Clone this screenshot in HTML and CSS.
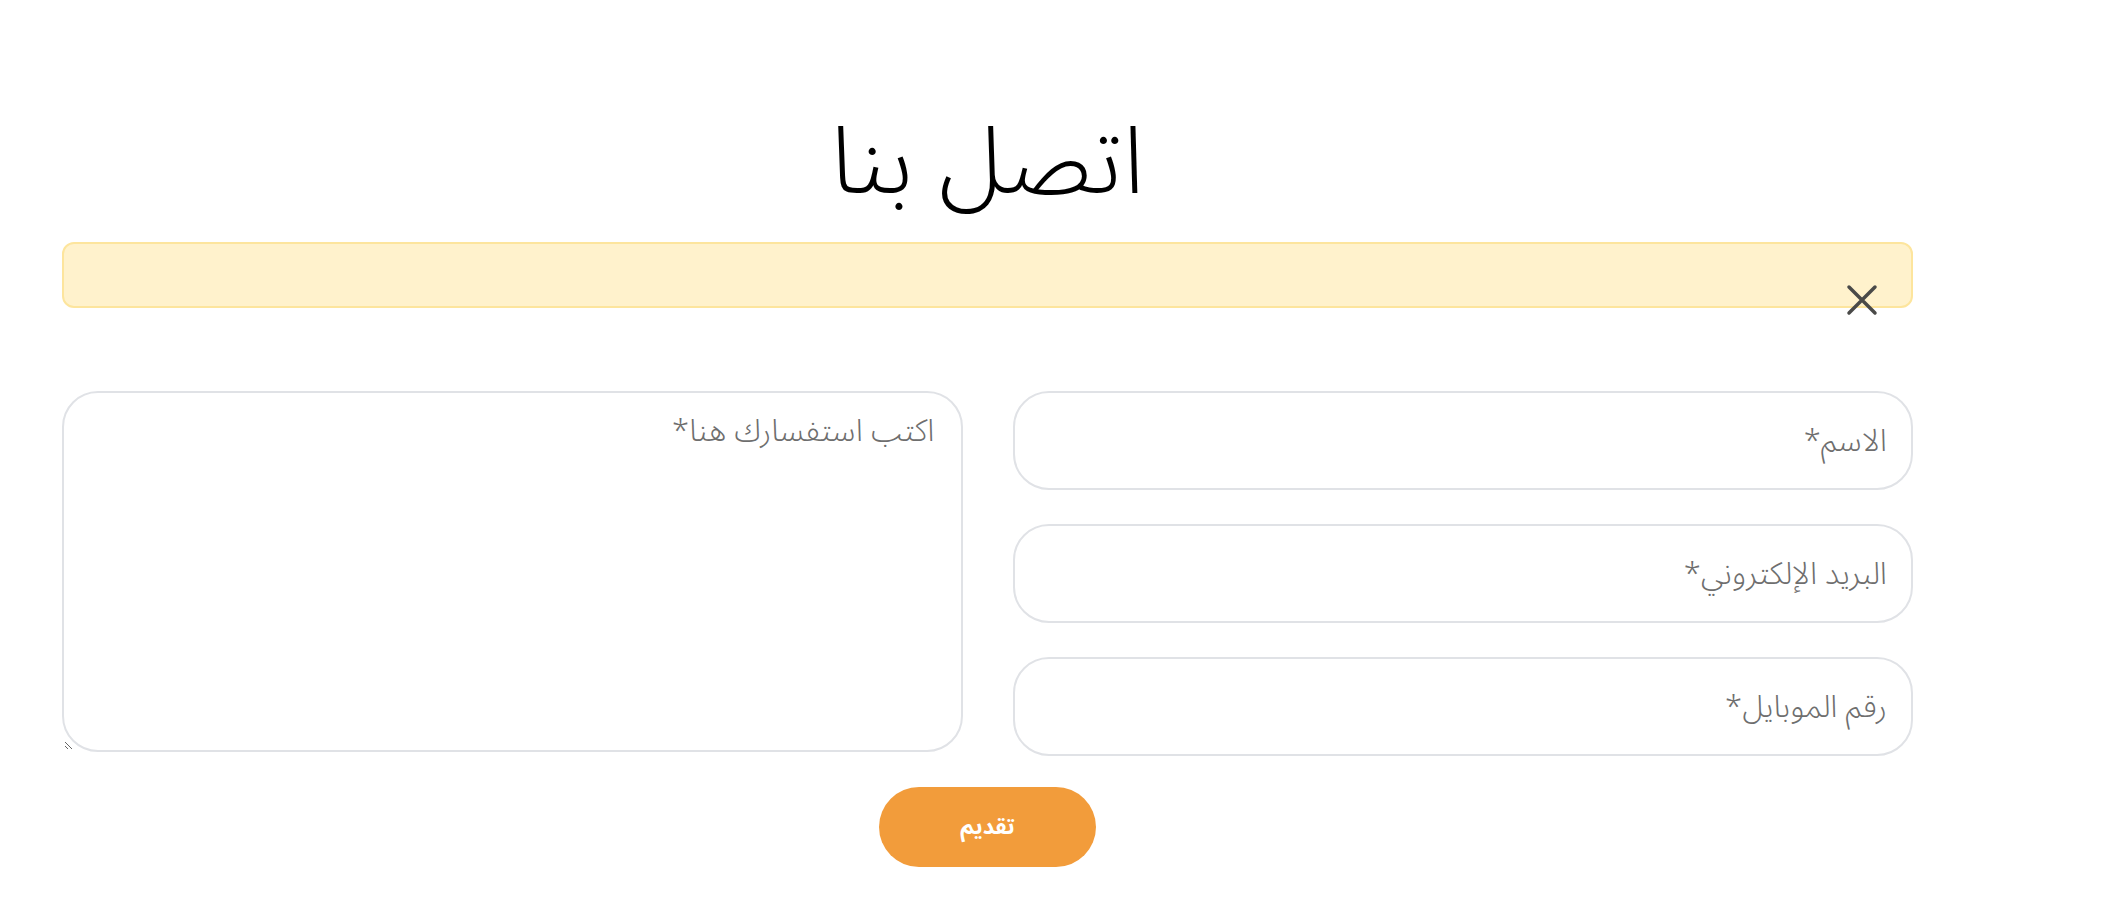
FILE: index.html
```html
<!DOCTYPE html>
<html lang="ar" dir="rtl">

  <head>
    <meta charset="UTF-8">
    <title>اتصل بنا</title>
    <link rel="stylesheet" href="styles.css">
  </head>

  <body>
    <div class="contact">
      <h1 class="contact-title">اتصل بنا</h1>

      <div class="alert">
        <button type="button" class="alert-close" aria-label="إغلاق">
          <svg width="32" height="32" viewBox="0 0 32 32">
            <path d="M3 3 L29 29 M29 3 L3 29" stroke="#4a4a48" stroke-width="3.5" stroke-linecap="round" fill="none" />
          </svg>
        </button>
      </div>

      <form class="contact-form">
        <div class="form-grid">
          <div class="fields">
            <input type="text" class="field" placeholder="الاسم*" />
            <input type="email" class="field" placeholder="البريد الإلكتروني*" />
            <input type="tel" class="field" placeholder="رقم الموبايل*" />
          </div>
          <textarea class="field message" placeholder="اكتب استفسارك هنا*"></textarea>
        </div>
        <div class="actions">
          <button type="submit" class="submit">تقديم</button>
        </div>
      </form>
    </div>
  </body>

</html>
```

FILE: styles.css
```css
body {
  margin: 0;
  background: #fff;
  font-family: "Noto Sans Arabic", "Noto Kufi Arabic", "DejaVu Sans", sans-serif;
}

.contact {
  width: 1851px;
  margin-right: 205px;
  padding-top: 104px;
}

.contact-title {
  margin: 0 0 20px;
  text-align: center;
  font-size: 94px;
  font-weight: 300;
  line-height: 118px;
  color: #000;
}

.alert {
  position: relative;
  height: 62px;
  border: 2px solid #fde59d;
  border-radius: 12px;
  background: #fff2cc;
}

.alert-close {
  position: absolute;
  top: 40px;
  right: 33px;
  width: 32px;
  height: 32px;
  padding: 0;
  border: none;
  background: none;
  cursor: pointer;
}

.contact-form {
  margin-top: 83px;
}

.form-grid {
  display: grid;
  grid-template-columns: 1fr 1fr;
  gap: 50px;
  align-items: start;
}

.fields {
  display: flex;
  flex-direction: column;
  gap: 34px;
}

.field {
  box-sizing: border-box;
  width: 100%;
  height: 99px;
  padding: 0 24px;
  border: 2px solid #e0e2e6;
  border-radius: 36px;
  background: #fff;
  direction: rtl;
  text-align: right;
  font-family: inherit;
  font-size: 31px;
  font-weight: 300;
  color: #333;
  outline: none;
}

.field::placeholder {
  color: #6e6e6e;
}

.message {
  height: 361px;
  padding: 5px 26px;
  resize: both;
}

.actions {
  margin-top: 31px;
  text-align: center;
}

.submit {
  width: 217px;
  height: 80px;
  border: none;
  border-radius: 40px;
  background: #f29c3b;
  color: #fff;
  font-family: inherit;
  font-size: 22px;
  font-weight: 700;
  cursor: pointer;
}
```
